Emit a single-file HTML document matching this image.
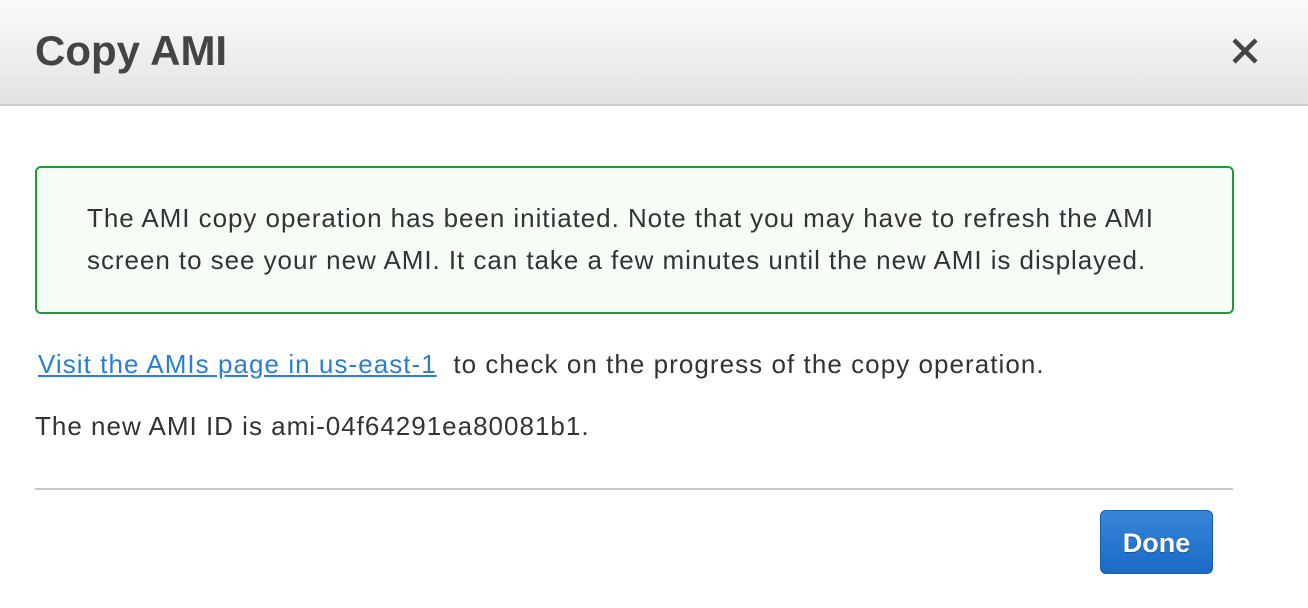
<!DOCTYPE html><html><head><style>
body{margin:0;width:1308px;height:608px;background:#fff;font-family:"Liberation Sans",sans-serif;color:#444;position:relative;overflow:hidden}
.hd{position:absolute;left:0;top:0;width:1308px;height:104px;background:linear-gradient(#fbfbfb,#e3e3e3);border-bottom:2px solid #cfcfcf}
.t{position:absolute;left:35px;top:27px;font-size:42px;font-weight:bold;color:#444}
.x{position:absolute;left:1231px;top:37px}
.box{position:absolute;left:35px;top:166px;width:1195px;height:144px;border:2px solid #1d9a3a;border-radius:6px;background:#f5fdf6}
.box p{margin:0;position:absolute;left:50px;top:29px;font-size:26px;letter-spacing:0.95px;line-height:42px;color:#333;white-space:nowrap}
.l{position:absolute;left:38px;top:349px;font-size:26px;letter-spacing:1.05px;color:#333;white-space:nowrap}
.l a{color:#2a7fd4;text-decoration:underline}
.id{position:absolute;left:35px;top:411px;font-size:26px;letter-spacing:1px;color:#333}
.hr{position:absolute;left:35px;top:488px;width:1198px;height:2px;background:#c8c8c8}
.btn{position:absolute;left:1100px;top:510px;width:113px;height:64px;border:1px solid #1560b0;border-radius:6px;background:linear-gradient(#3786d8,#1a6ac6);color:#fff;font-weight:bold;font-size:27px;text-align:center;line-height:64px;box-sizing:border-box;text-shadow:0 1px 1px #124f96}
</style></head><body>
<div class="hd"><div class="t">Copy AMI</div>
<svg class="x" width="28" height="28" viewBox="0 0 28 28"><path d="M3 3L25 25M25 3L3 25" stroke="#444" stroke-width="4.5"/></svg></div>
<div class="box"><p>The AMI copy operation has been initiated. Note that you may have to refresh the AMI<br>screen to see your new AMI. It can take a few minutes until the new AMI is displayed.</p></div>
<div class="l"><a>Visit the AMIs page in us-east-1</a>&nbsp; to check on the progress of the copy operation.</div>
<div class="id">The new AMI ID is ami-04f64291ea80081b1.</div>
<div class="hr"></div>
<div class="btn">Done</div>
</body></html>
